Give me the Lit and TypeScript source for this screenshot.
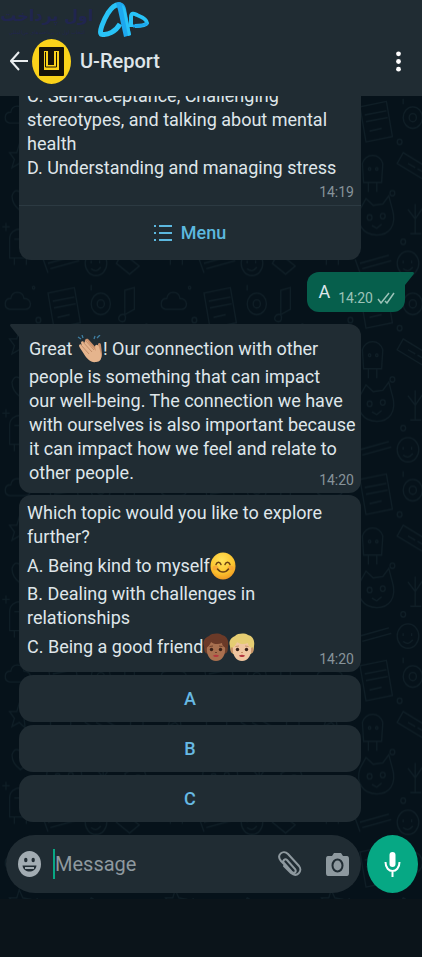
import { LitElement, html, svg, css } from "lit";
import { customElement } from "lit/decorators.js";

const clap = html`<svg class="emoji" viewBox="0 0 26 28" role="img" aria-label="clapping hands">
  <path d="M1 2l3 2M5 0l1 3M18 1l-1 3M23 0l-3 3" stroke="#3f7fa3" stroke-width="1.3" fill="none"/>
  <path d="M8 5c2-2 3-1 4 0l9 10V9c1-2 3-1 3 1l1 9c0 5-3 8-7 7-5 0-9-4-12-9z" fill="#c98f6a"/>
  <path d="M2 11c0-2 2-2 3-1L4 8c0-2 2-2 3-1l1 1c0-3 2-3 3-1l8 9-1-4c0-3 3-3 4 0l2 7c1 5-1 8-5 8-5 1-9-3-12-8l-4-6z" fill="#e5b48d"/>
  <path d="M4 10l8 9M6 7l9 10M9 6l8 9" stroke="#b9835f" stroke-width=".8" fill="none"/>
</svg>`;

const smile = html`<svg class="emoji" viewBox="0 0 26 28" role="img" aria-label="smiling face">
  <defs><radialGradient id="g" cx=".45" cy=".3" r=".75"><stop offset="0" stop-color="#ffe25c"/><stop offset=".6" stop-color="#fcc62f"/><stop offset="1" stop-color="#ee9220"/></radialGradient></defs>
  <ellipse cx="13" cy="14" rx="12.5" ry="13.5" fill="url(#g)"/>
  <ellipse cx="5.500" cy="16" rx="3" ry="2.500" fill="#f69435" opacity=".6"/><ellipse cx="20.500" cy="16" rx="3" ry="2.500" fill="#f69435" opacity=".6"/>
  <path d="M6 12.500c1-3 4-3 5 0M15 12.500c1-3 4-3 5 0M7.500 17c3 4 8 4 11 0" stroke="#6b4213" stroke-width="1.500" fill="none" stroke-linecap="round"/>
</svg>`;

const face = (skin: string, shade: string, hair: string, label: string) => html`<svg class="emoji" viewBox="0 0 26 28" role="img" aria-label=${label}>
  <path d="M1 13C-1 8 3 4 6 3c3-3 10-3 13-1 5 1 7 6 6 11 0 4-1 6-3 8H4c-2-2-3-5-3-8z" fill=${hair}/>
  <ellipse cx="3.500" cy="17" rx="2" ry="3" fill=${shade}/><ellipse cx="22.500" cy="17" rx="2" ry="3" fill=${shade}/>
  <path d="M4 14c1-5 5-6 9-6s8 1 9 6c1 8-3 14-9 14S3 22 4 14z" fill=${skin}/>
  <path d="M3 15c-1-5 2-8 5-9 4 2 8 2 11 0 3 2 5 5 4 9-2-1-4-2-4-5-4 2-9 1-11-1-1 3-3 5-5 6z" fill=${hair}/>
  <circle cx="8.500" cy="16.500" r="1.700" fill="#3a2118"/><circle cx="17.500" cy="16.500" r="1.700" fill="#3a2118"/>
  <path d="M6.500 13.500l3.500-.5M16 13l3.500.5M12 19.500h2" stroke=${shade} stroke-width="1"/>
  <path d="M10 22.500c2-1 4-1 6 0-1 2-5 2-6 0z" fill="#b5373f"/>
</svg>`;

const doodles = svg`
  <path d="M8 20c-5-1-5-8 1-8 1-6 10-6 11 0 7 0 7 8 1 8z"/>
  <path d="M40 8l22-4 5 26-22 4zM44 14l18-3M45 19l18-3M48 26l10-2"/>
  <circle cx="84" cy="16" r="8"/><circle cx="84" cy="16" r="3"/>
  <path d="M104 6v18l8-4V4zM104 24c-5-1-7 4-3 5s4-3 3-5"/>
  <path d="M16 36l3 6 6 1-5 4 1 7-5-4-6 3 2-6-4-5h6z"/>
  <path d="M42 50c3-8 14-8 17 0l-1 14H43zM47 64v7M54 64v7"/><circle cx="48" cy="54" r="1"/><circle cx="54" cy="54" r="1"/>
  <path d="M76 42l26 14-5 8-26-14zM80 50l6 3M88 54l6 3"/>
  <path d="M114 44c-8 2-6 12 0 16 6-4 8-14 0-16zM114 60v14"/>
  <path d="M10 74c2-6 7-4 8 0 2-5 9-4 7 2-1 5-6 8-8 9-3-2-7-6-7-11z"/>
  <path d="M40 84l5-8 6 5 8-1 5-6 3 10c4 12-3 19-13 19-11 0-18-8-14-19z"/><circle cx="48" cy="90" r="2"/><circle cx="59" cy="89" r="2"/><path d="M50 96l4 2 4-3"/>
  <path d="M86 80v22M80 84l6 7 7-9M82 102h9"/>
  <path d="M104 88l14-8 7 18-14 6z"/><circle cx="115" cy="92" r="3"/>
  <path d="M8 106c0-10 18-10 18 0v14H8zM12 120v5M22 120v5M12 106h10"/>
  <path d="M40 124l24-6M42 128l24-6M36 121l4 10"/><circle cx="80" cy="124" r="9"/><path d="M76 122v2M83 122v2M76 128c3 2 5 2 8-1"/>
  <path d="M102 116l14 10-8 6-11-8zM118 112l7 4"/>
  <circle cx="32" cy="28" r="2"/><circle cx="73" cy="34" r="2"/><circle cx="98" cy="35" r="2"/><circle cx="32" cy="66" r="2"/><circle cx="67" cy="72" r="2"/><circle cx="97" cy="74" r="2"/><circle cx="34" cy="100" r="2"/><circle cx="76" cy="108" r="2"/><circle cx="94" cy="112" r="2"/><circle cx="28" cy="4" r="1"/><circle cx="122" cy="32" r="1"/>
  <path d="M31 42v6M28 45h6M125 66v6M122 69h6M5 94v6M2 97h6M76 2v4"/>`;

@customElement("app-root")
export class AppRoot extends LitElement {
  static styles = css`
    :host { display: flex; flex-direction: column; height: 100vh; overflow: hidden; background: #0b141a; color: #dfe6ea; font: 18px/24px Roboto, "Liberation Sans", sans-serif; }
    * { box-sizing: border-box; }
    button { font: inherit; color: inherit; background: none; border: 0; padding: 0; cursor: pointer; }
    svg { display: block; flex: none; }
    p { margin: 0; }
    header { flex: none; background: #202c33; height: 96px; }
    .brand { display: flex; gap: 4px; height: 40px; align-items: center; color: #20254f; }
    .names { width: 94px; display: flex; flex-direction: column; align-items: center; font-family: "DejaVu Sans", sans-serif; white-space: nowrap; }
    .name { font-size: 16px; font-weight: bold; line-height: 24px; }
    .slogan { font-size: 5px; line-height: 8px; }
    .bar { display: flex; align-items: center; height: 42px; padding: 0 21px 0 10px; }
    .avatar { margin-left: 4px; }
    h1 { margin: 0 0 0 9px; flex: 1; font-size: 20px; line-height: 24px; font-weight: 500; }
    main { flex: 1; min-height: 0; position: relative; overflow: hidden; display: flex; flex-direction: column; justify-content: flex-end; background: #06121a; }
    .wall { position: absolute; inset: 0; width: 100%; height: 100%; }
    .wall g { fill: none; stroke: #0f1e26; stroke-width: 1; }
    .chat { position: relative; display: flex; flex-direction: column; padding: 0 61px 13px 19px; }
    .bubble { background: #202c33; border-radius: 12px; padding: 6px 7px 6px 8px; white-space: nowrap; }
    .tall { height: 33px; line-height: 33px; }
    .emoji { display: inline-block; vertical-align: middle; width: 26px; height: 28px; margin-top: -3px; }
    time { font-size: 14px; line-height: 14px; color: #87939a; }
    .last { display: flex; justify-content: space-between; min-height: 26px; }
    .last time { align-self: flex-end; }
    .last.tall { height: 36px; }
    .list { padding-bottom: 0; }
    .stamp { display: flex; justify-content: flex-end; padding: 5px 0 6px; }
    .menu { display: flex; align-items: center; justify-content: center; gap: 9px; height: 55px; width: calc(100% + 15px); margin: 0 -7px 0 -8px; border-top: 1px solid #2c3a42; color: #5cb8df; font-weight: 500; }
    .out { position: relative; align-self: flex-end; margin: 12px -44px 12px 0; height: 40px; padding: 0 10px 0 11px; display: flex; align-items: center; gap: 8px; background: #065f4c; border-radius: 12px 0 12px 12px; }
    .out .meta { display: flex; align-items: center; gap: 4px; padding-top: 11px; }
    .out time, .out .ticks { color: #9cc3b8; }
    .tail { position: absolute; top: 0; left: 100%; }
    .in { position: relative; border-top-left-radius: 0; padding: 8px 7px 6px 10px; }
    .in .tail { left: auto; right: 100%; }
    .poll { margin-top: 2px; }
    .choices { display: flex; flex-direction: column; gap: 3px; margin-top: 3px; }
    .choices button { height: 47px; border-radius: 14px; background: #202c33; color: #67b9e3; font-weight: 500; }
    .composer { position: relative; display: flex; gap: 6px; padding: 0 4px 6px 6px; }
    .field { flex: 1; min-width: 0; height: 58px; border-radius: 29px; background: #202c33; display: flex; align-items: center; padding: 0 12px; color: #8e999f; }
    .caret { width: 2px; height: 30px; background: #08a884; margin-left: 12px; }
    input { flex: 1; min-width: 0; border: 0; outline: 0; padding: 0; background: none; color: #e3e9ec; font: inherit; font-size: 20px; line-height: 28px; }
    input::placeholder { color: #8e999f; opacity: 1; }
    .camera { margin-left: 24px; }
    .mic { width: 51px; height: 58px; border-radius: 50%; background: #06a884; color: #fff; display: grid; place-items: center; }
    footer { flex: none; height: 58px; }
  `;

  render() {
    return html`
      <header>
        <div class="brand">
          <div class="names" dir="rtl" lang="fa"><span class="name">اول پرداخت</span><span class="slogan">انتخاب اول در پرداخت‌های بین‌المللی</span></div>
          <svg width="52" height="38" viewBox="0 0 52 38" fill="none" stroke="#28c3f7" stroke-linejoin="round">
            <path d="M22 23C18 30 10 35 3 33 1 31 5 20 10 12 14 6 18 3 22 4" stroke-width="5"/>
            <path d="M18 2c5-2 9 1 10 6l5 26-7 2-6-27z" fill="#1da8ef" stroke="none"/>
            <path d="M24 4c2 1 3 3 4 7l5 23-3 1z" fill="#28c3f7" stroke="none"/>
            <path d="M33 26V16c0-4 3-4 6-2 5 2 10 5 10 8-1 2-7 3-12 3" stroke-width="4"/>
            <path d="M35 25c6 0 13-1 14-3" stroke="#1da8ef" stroke-width="3"/>
          </svg>
        </div>
        <div class="bar">
          <button aria-label="Back"><svg width="18" height="20" viewBox="0 0 18 20" fill="none" stroke="#e9edef" stroke-width="2"><path d="M18 10H2M9 1L1 10l8 9"/></svg></button>
          <svg class="avatar" width="39" height="45" viewBox="0 0 39 45" role="img" aria-label="U-Report logo">
            <ellipse cx="19.500" cy="22.500" rx="19.500" ry="22.500" fill="#fbd21a"/><rect x="7" y="8" width="25" height="29" rx="1" fill="#17130a"/>
            <path d="M12 12h4v14h6V12h5v19H12z" fill="#fbd21a"/><path d="M13.500 13v15h11V13" fill="none" stroke="#17130a" stroke-width="1"/>
          </svg>
          <h1>U-Report</h1>
          <button aria-label="More options"><svg width="5" height="21" viewBox="0 0 5 21" fill="#fff"><circle cx="2.500" cy="2.800" r="2.400"/><circle cx="2.500" cy="10.500" r="2.400"/><circle cx="2.500" cy="18.200" r="2.400"/></svg></button>
        </div>
      </header>
      <main>
        <svg class="wall" aria-hidden="true">
          <defs><pattern id="doodles" width="130" height="138" patternUnits="userSpaceOnUse" patternTransform="scale(1.2 1.35)"><g>${doodles}</g></pattern></defs>
          <rect width="100%" height="100%" fill="url(#doodles)"/>
        </svg>
        <div class="chat">
          <article class="bubble list">
            <p>C. Self-acceptance, Challenging</p>
            <p>stereotypes, and talking about mental</p>
            <p>health</p>
            <p>D. Understanding and managing stress</p>
            <div class="stamp"><time>14:19</time></div>
            <button class="menu"><svg width="18" height="18" viewBox="0 0 18 18" fill="none" stroke="currentColor" stroke-width="2"><path d="M0 2h2M5 2h13M0 9h2M5 9h13M0 16h2M5 16h13"/></svg>Menu</button>
          </article>
          <article class="out">
            <span>A</span>
            <span class="meta"><time>14:20</time><svg class="ticks" width="18" height="12" viewBox="0 0 18 12" fill="none" stroke="currentColor" stroke-width="1.500"><path d="M1 7l3 4 8-10M8 9l2 2 7-10"/></svg></span>
            <svg class="tail" width="9" height="13" viewBox="0 0 9 13"><path d="M0 0h8q2 1 0 3L0 13z" fill="#065f4c"/></svg>
          </article>
          <article class="bubble in">
            <svg class="tail" width="9" height="13" viewBox="0 0 9 13"><path d="M9 0H1Q-1 1 1 3l8 10z" fill="#202c33"/></svg>
            <p class="tall">Great ${clap}! Our connection with other</p>
            <p>people is something that can impact</p>
            <p>our well-being. The connection we have</p>
            <p>with ourselves is also important because</p>
            <p>it can impact how we feel and relate to</p>
            <div class="last"><p>other people.</p><time>14:20</time></div>
          </article>
          <article class="bubble poll">
            <p>Which topic would you like to explore</p>
            <p>further?</p>
            <p class="tall">A. Being kind to myself${smile}</p>
            <p>B. Dealing with challenges in</p>
            <p>relationships</p>
            <div class="last tall"><p>C. Being a good friend${face("#a9704f", "#6d402c", "#6b3a28", "person")}${face("#f0c6a0", "#c99468", "#e5cd72", "person with blond hair")}</p><time>14:20</time></div>
          </article>
          <div class="choices"><button>A</button><button>B</button><button>C</button></div>
        </div>
        <div class="composer">
          <div class="field">
            <button aria-label="Emoji"><svg width="23" height="26" viewBox="0 0 23 26"><ellipse cx="11.500" cy="13" rx="11.500" ry="13" fill="#a2acb2"/><ellipse cx="7.800" cy="9" rx="1.700" ry="2.300" fill="#202c33"/><ellipse cx="15.200" cy="9" rx="1.700" ry="2.300" fill="#202c33"/><path d="M4.500 14.500h14c-1 8-13 8-14 0z" fill="#202c33"/><path d="M7 17h9" stroke="#a2acb2" stroke-width="2"/></svg></button>
            <span class="caret"></span>
            <input type="text" placeholder="Message" aria-label="Message">
            <button aria-label="Attach"><svg width="25" height="26" viewBox="0 0 25 26" fill="none" stroke="#8e999f" stroke-width="2" stroke-linecap="round"><path d="M10 9l8 9c2 3-1 5-3 3L4 10C-1 4 6-2 11 3l11 12c4 5-2 12-8 7L7 15M10 9c-2-2-5 1-3 3l7 8"/></svg></button>
            <button class="camera" aria-label="Camera"><svg width="23" height="25" viewBox="0 0 23 25"><path d="M8 1h7l2 3h4q2 0 2 3v14q0 3-2 3H2q-2 0-2-3V7q0-3 2-3h4z" fill="#8e999f"/><ellipse cx="11.500" cy="13.500" rx="5" ry="6" fill="none" stroke="#202c33" stroke-width="2"/></svg></button>
          </div>
          <button class="mic" aria-label="Record voice message"><svg width="17" height="27" viewBox="0 0 17 27"><rect x="5.500" y="1" width="6" height="15" rx="3" fill="#fff"/><path d="M1.500 11c0 12 14 12 14 0M8.500 20v6" fill="none" stroke="#fff" stroke-width="2"/></svg></button>
        </div>
      </main>
      <footer></footer>
    `;
  }
}
